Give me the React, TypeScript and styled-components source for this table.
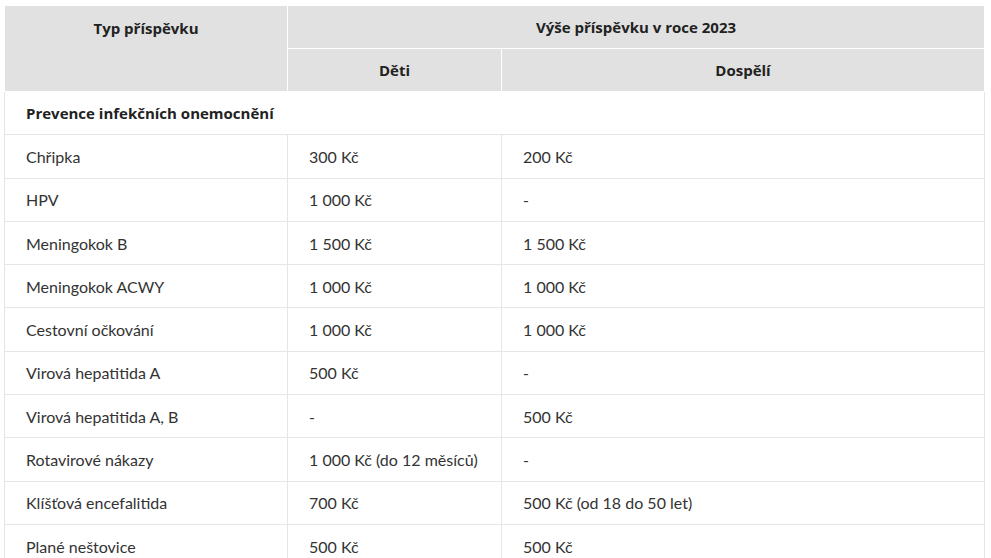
import styled, { createGlobalStyle } from 'styled-components';

const GlobalStyle = createGlobalStyle`
  body {
    margin: 0;
    background: #ffffff;
    font-family: 'Lato', 'Noto Sans', sans-serif;
    color: #333333;
  }
`;

type Row = { name: string; kids: string; adults: string };

const rows: Row[] = [
  { name: 'Chřipka', kids: '300 Kč', adults: '200 Kč' },
  { name: 'HPV', kids: '1 000 Kč', adults: '-' },
  { name: 'Meningokok B', kids: '1 500 Kč', adults: '1 500 Kč' },
  { name: 'Meningokok ACWY', kids: '1 000 Kč', adults: '1 000 Kč' },
  { name: 'Cestovní očkování', kids: '1 000 Kč', adults: '1 000 Kč' },
  { name: 'Virová hepatitida A', kids: '500 Kč', adults: '-' },
  { name: 'Virová hepatitida A, B', kids: '-', adults: '500 Kč' },
  { name: 'Rotavirové nákazy', kids: '1 000 Kč (do 12 měsíců)', adults: '-' },
  { name: 'Klíšťová encefalitida', kids: '700 Kč', adults: '500 Kč (od 18 do 50 let)' },
  { name: 'Plané neštovice', kids: '500 Kč', adults: '500 Kč' },
];

export default function App() {
  return (
    <>
      <GlobalStyle />
      <Wrapper>
        <Table>
          <colgroup>
            <col style={{ width: 283 }} />
            <col style={{ width: 214 }} />
            <col />
          </colgroup>
          <thead>
            <tr>
              <HeadCell rowSpan={2} $top>Typ příspěvku</HeadCell>
              <HeadCell colSpan={2}>Výše příspěvku v roce 2023</HeadCell>
            </tr>
            <tr>
              <HeadCell>Děti</HeadCell>
              <HeadCell>Dospělí</HeadCell>
            </tr>
          </thead>
          <tbody>
            <tr>
              <SectionCell colSpan={3}>Prevence infekčních onemocnění</SectionCell>
            </tr>
            {rows.map((r) => (
              <tr key={r.name}>
                <Cell>{r.name}</Cell>
                <Cell>{r.kids}</Cell>
                <Cell>{r.adults}</Cell>
              </tr>
            ))}
          </tbody>
        </Table>
      </Wrapper>
    </>
  );
}

const Wrapper = styled.div`
  padding: 5px 6px 0 4px;
`;

const Table = styled.table`
  width: 981px;
  border-collapse: collapse;
  table-layout: fixed;
`;

const HeadCell = styled.th<{ $top?: boolean }>`
  height: 42px;
  padding: 0 21px;
  background: #e1e1e1;
  border: 1px solid #ffffff;
  font-family: 'Open Sans', sans-serif;
  font-size: 15px;
  font-weight: 700;
  color: #222222;
  text-align: center;
  vertical-align: ${({ $top }) => ($top ? 'top' : 'middle')};
  line-height: ${({ $top }) => ($top ? '44px' : '20px')};
`;

const Cell = styled.td`
  height: 42.3px;
  padding: 0 21px;
  border: 1px solid #e6e6e6;
  font-size: 16px;
  color: #333333;
  vertical-align: middle;
  white-space: nowrap;
`;

const SectionCell = styled(Cell)`
  font-family: 'Open Sans', sans-serif;
  font-size: 15px;
  font-weight: 700;
  color: #222222;
`;
